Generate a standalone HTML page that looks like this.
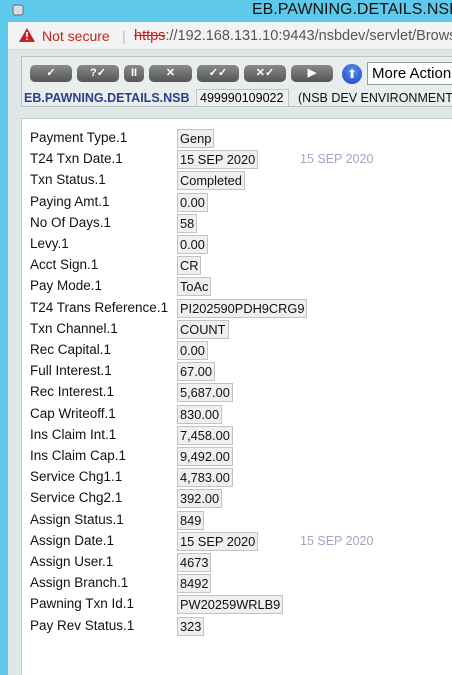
<!DOCTYPE html>
<html style="width:452px;height:675px;overflow:hidden"><head><meta charset="utf-8"><style>
*{margin:0;padding:0;box-sizing:border-box}
body{width:452px;height:675px;overflow:hidden;background:#dfe7e7;font-family:"Liberation Sans",sans-serif;position:relative}
.title{position:absolute;left:0;top:0;width:452px;height:22px;background:#5ec9ea;overflow:hidden}
.title span{position:absolute;left:252px;top:1px;font-size:16px;color:#111;white-space:nowrap}
.left{position:absolute;left:0;top:22px;width:8px;height:653px;background:#5ec9ea}
.addr{position:absolute;left:8px;top:22px;width:444px;height:28px;background:#f3f3f3;border-bottom:1px solid #d6d6d6;overflow:hidden}
.addr .t{position:absolute;top:6px;font-size:14px;white-space:nowrap}
.tb{position:absolute;left:21px;top:56px;width:431px;height:51px;border:1px solid #b9c2c2;border-right:none;background:#e8eeee;overflow:hidden}
.btn{position:absolute;top:8px;height:17px;border-radius:5px;background:linear-gradient(#8a8a8a,#555);color:#fff;font-size:11px;font-weight:bold;text-align:center;line-height:17px}
.panel{position:absolute;left:21px;top:118px;width:431px;height:557px;background:#fff;border:1px solid #c4c9c9;border-right:none;border-bottom:none}
.row{position:absolute;left:30px;font-size:13.5px;color:#111;white-space:nowrap}
.v{position:absolute;left:177px;height:19px;border:1px solid #c3c3c3;background:#efefef;font-size:12.8px;padding:0 2px;line-height:17px;color:#111;white-space:nowrap}
.d{position:absolute;left:300px;font-size:12.5px;color:#a0a8c0}
</style></head><body>
<div class="title"><svg style="position:absolute;left:11px;top:3px" width="14" height="14"><rect x="2" y="2" width="10" height="10" rx="2" fill="#d8dde4" stroke="#667" /></svg><span>EB.PAWNING.DETAILS.NSB - G</span></div>
<div class="left"></div>
<div class="addr">
<svg style="position:absolute;left:11px;top:6px" width="16" height="14"><polygon points="8,0 16,14 0,14" fill="#c5221f"/><rect x="7.2" y="4" width="1.6" height="5" fill="#fff"/><rect x="7.2" y="10.5" width="1.6" height="1.6" fill="#fff"/></svg>
<span class="t" style="left:34px;color:#c5221f">Not secure</span>
<span class="t" style="left:114px;color:#bbb">|</span>
<span class="t" style="left:126px;color:#555;font-size:14.5px"><s style="color:#c5221f">https</s>://192.168.131.10:9443/nsbdev/servlet/BrowserS</span>
</div>
<div class="tb">
<div class="btn" style="left:8px;width:42px">✓</div>
<div class="btn" style="left:55px;width:42px">?✓</div>
<div class="btn" style="left:102px;width:20px">II</div>
<div class="btn" style="left:127px;width:43px">✕</div>
<div class="btn" style="left:175px;width:42px">✓✓</div>
<div class="btn" style="left:222px;width:42px">✕✓</div>
<div class="btn" style="left:269px;width:42px">▶</div>
<div style="position:absolute;left:320px;top:7px;width:20px;height:20px;border-radius:50%;background:radial-gradient(circle at 50% 35%,#5a8ff0,#1846b8);color:#fff;font-size:12px;text-align:center;line-height:20px">⬆</div>
<div style="position:absolute;left:345px;top:5px;width:100px;height:23px;border:1px solid #999;background:#fff;font-size:15px;padding:2px 4px;white-space:nowrap;overflow:hidden">More Actions</div>
<div style="position:absolute;left:2px;top:34px;font-size:12.5px;font-weight:bold;color:#2b3f8c;white-space:nowrap">EB.PAWNING.DETAILS.NSB</div>
<div style="position:absolute;left:174px;top:32px;width:93px;height:19px;border:1px solid #c3c3c3;background:#efefef;font-size:12.5px;padding:0 3px;line-height:17px">499990109022</div>
<div style="position:absolute;left:276px;top:34px;font-size:12.5px;white-space:nowrap;color:#111">(NSB DEV ENVIRONMENT)</div>
</div>
<div class="panel"></div>
<div id="rows"></div>
<script>
var r=[["Payment Type.1","Genp"],["T24 Txn Date.1","15 SEP 2020",1],["Txn Status.1","Completed"],["Paying Amt.1","0.00"],["No Of Days.1","58"],["Levy.1","0.00"],["Acct Sign.1","CR"],["Pay Mode.1","ToAc"],["T24 Trans Reference.1","PI202590PDH9CRG9"],["Txn Channel.1","COUNT"],["Rec Capital.1","0.00"],["Full Interest.1","67.00"],["Rec Interest.1","5,687.00"],["Cap Writeoff.1","830.00"],["Ins Claim Int.1","7,458.00"],["Ins Claim Cap.1","9,492.00"],["Service Chg1.1","4,783.00"],["Service Chg2.1","392.00"],["Assign Status.1","849"],["Assign Date.1","15 SEP 2020",1],["Assign User.1","4673"],["Assign Branch.1","8492"],["Pawning Txn Id.1","PW20259WRLB9"],["Pay Rev Status.1","323"]];
var h="";r.forEach(function(x,i){var y=130+i*21.2;h+='<div class="row" style="top:'+y+'px">'+x[0]+'</div><div class="v" style="top:'+(y-1)+'px">'+x[1]+'</div>';if(x[2])h+='<div class="d" style="top:'+(y+1)+'px">15 SEP 2020</div>';});
document.getElementById("rows").innerHTML=h;
</script>
</body></html>
